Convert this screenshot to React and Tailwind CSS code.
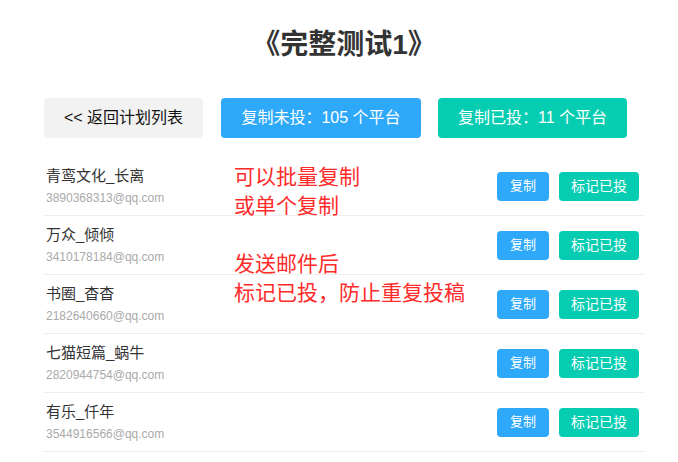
const rows = [
  { name: '青鸾文化_长离', email: '3890368313@qq.com' },
  { name: '万众_倾倾', email: '3410178184@qq.com' },
  { name: '书圈_杳杳', email: '2182640660@qq.com' },
  { name: '七猫短篇_蜗牛', email: '2820944754@qq.com' },
  { name: '有乐_仟年', email: '3544916566@qq.com' },
];

const App = () => {
  return (
    <div
      className="relative min-h-[462px] bg-white"
      style={{ fontFamily: '"Liberation Sans", Arial, "Noto Sans CJK SC", sans-serif' }}
    >
      <div className="ml-[44px] w-[600px] pt-[29px]">
        <h1 className="text-center text-[28px] leading-[32px] font-bold text-[#333]">《完整测试1》</h1>

        <div className="mt-[37px] flex items-center">
          <button className="h-[40px] w-[159px] rounded-[4px] bg-[#f2f2f2] text-[16px] text-[#111]">
            &lt;&lt; 返回计划列表
          </button>
          <button className="ml-[18px] h-[40px] w-[200px] rounded-[4px] bg-[#2ea9f9] text-[16px] text-white">
            复制未投：105 个平台
          </button>
          <button className="ml-[17px] h-[40px] w-[189px] rounded-[4px] bg-[#06cdb1] text-[16px] text-white">
            复制已投：11 个平台
          </button>
        </div>

        <div className="mt-[19px]">
          {rows.map((row) => (
            <div key={row.email} className="flex h-[59px] items-center border-b border-[#eeeeee] pr-[5px]">
              <div className="flex-1 pl-[2px]">
                <div className="text-[15px] leading-[18px] text-[#333]">{row.name}</div>
                <div className="mt-[5px] text-[12px] leading-[16px] text-[#aaa]">{row.email}</div>
              </div>
              <button className="h-[29px] w-[52px] rounded-[4px] bg-[#2ea9f9] text-[13px] text-white">复制</button>
              <button className="ml-[10px] h-[29px] w-[80px] rounded-[4px] bg-[#06cdb1] text-[14px] text-white">
                标记已投
              </button>
            </div>
          ))}
        </div>
      </div>

      <div className="absolute left-[234px] top-[162px] whitespace-pre-line text-[21px] leading-[29px] text-[#ff2b2b]">
        {'可以批量复制\n或单个复制\n\n发送邮件后\n标记已投，防止重复投稿'}
      </div>
    </div>
  );
};

export default App;
